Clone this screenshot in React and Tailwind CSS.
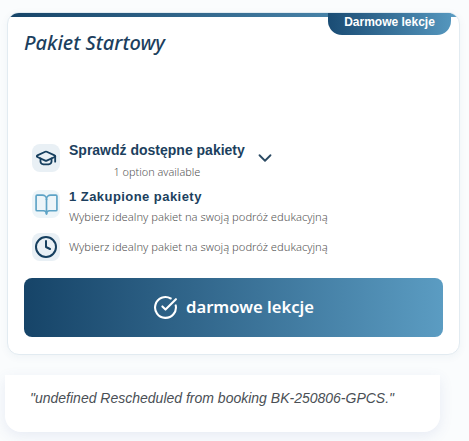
import React from "react";
import { GraduationCap, BookOpen, Clock, ChevronDown, CircleCheckBig } from "lucide-react";

const sans = "font-['Liberation_Sans',sans-serif]";
const noto = "font-['Noto_Sans',sans-serif]";

export default function App() {
  return (
    <div className="w-[469px] h-[441px] overflow-hidden bg-[#fafcfd] pt-3">
      <div className="relative ml-[7px] w-[453px] h-[343px] rounded-xl bg-white border border-[#e2ebf1] shadow-[0_2px_8px_rgba(30,80,120,0.05)] overflow-hidden flex flex-col">
        <div className="h-1 bg-gradient-to-r from-[#164468] to-[#5b9cc2]" />
        <div className={`absolute top-0 right-[8px] w-[123px] h-[22px] pb-[5px] rounded-b-[14px] rounded-t-none bg-gradient-to-r from-[#1a4c74] to-[#5496bd] text-white text-xs font-bold flex items-center justify-center ${sans}`}>
          Darmowe lekcje
        </div>
        <h2 className={`mt-[13px] ml-4 text-[20px] leading-[26px] italic font-medium text-[#1c3f5e] ${noto}`}>Pakiet Startowy</h2>
        <div className="mt-[85px] ml-6 flex flex-col">
          <div className="flex items-start h-[46px]">
            <div className="mt-[3px] w-7 h-7 rounded-lg bg-[#e9f0f5] flex items-center justify-center text-[#163f5f]">
              <GraduationCap size={22} strokeWidth={2} />
            </div>
            <div className="mt-[1px] ml-[9px] flex flex-col">
              <span className={`text-[14px] leading-[17px] font-bold text-[#1c3f5e] ${sans}`}>Sprawdź dostępne pakiety</span>
              <span className={`mt-[6px] text-center text-[10.9px] leading-[14px] font-light text-[#555] ${noto}`}>1 option available</span>
            </div>
            <ChevronDown size={22} className="ml-[9px] mt-[6px] text-[#2b4a63]" />
          </div>
          <div className="flex items-start h-[45px]">
            <div className="mt-[3px] w-7 h-7 rounded-lg bg-[#edf5f9] flex items-center justify-center text-[#5da3c6]">
              <BookOpen size={25} strokeWidth={1.6} />
            </div>
            <div className="mt-[1px] ml-[9px] flex flex-col">
              <span className={`text-[13px] leading-[17px] font-bold text-[#1c3f5e] tracking-[0.45px] ${sans}`}>1 Zakupione pakiety</span>
              <span className={`mt-[5px] text-[11.2px] leading-[14px] font-light text-[#555] ${noto}`}>Wybierz idealny pakiet na swoją podróż edukacyjną</span>
            </div>
          </div>
          <div className="flex items-center h-[30px]">
            <div className="w-7 h-7 rounded-lg bg-[#e9f0f5] flex items-center justify-center text-[#163f5f]">
              <Clock size={24} strokeWidth={2} />
            </div>
            <span className={`ml-[9px] text-[11.2px] leading-[14px] font-light text-[#555] ${noto}`}>Wybierz idealny pakiet na swoją podróż edukacyjną</span>
          </div>
        </div>
        <button className={`mt-[16px] mx-4 h-[59px] rounded-lg bg-gradient-to-r from-[#164468] to-[#5b9cc2] text-white flex items-center justify-center gap-2 text-[16.6px] font-semibold ${noto}`}>
          <CircleCheckBig size={25} strokeWidth={2} />
          darmowe lekcje
        </button>
      </div>
      <div className="mt-[20px] ml-[5px] w-[435px] h-[57px] rounded-b-2xl bg-white shadow-[0_4px_14px_rgba(70,90,170,0.10)] pt-[13px] pl-[25px]">
        <p className={`text-[14px] leading-5 italic text-[#4a4f55] ${sans}`}>"undefined Rescheduled from booking BK-250806-GPCS."</p>
      </div>
    </div>
  );
}
